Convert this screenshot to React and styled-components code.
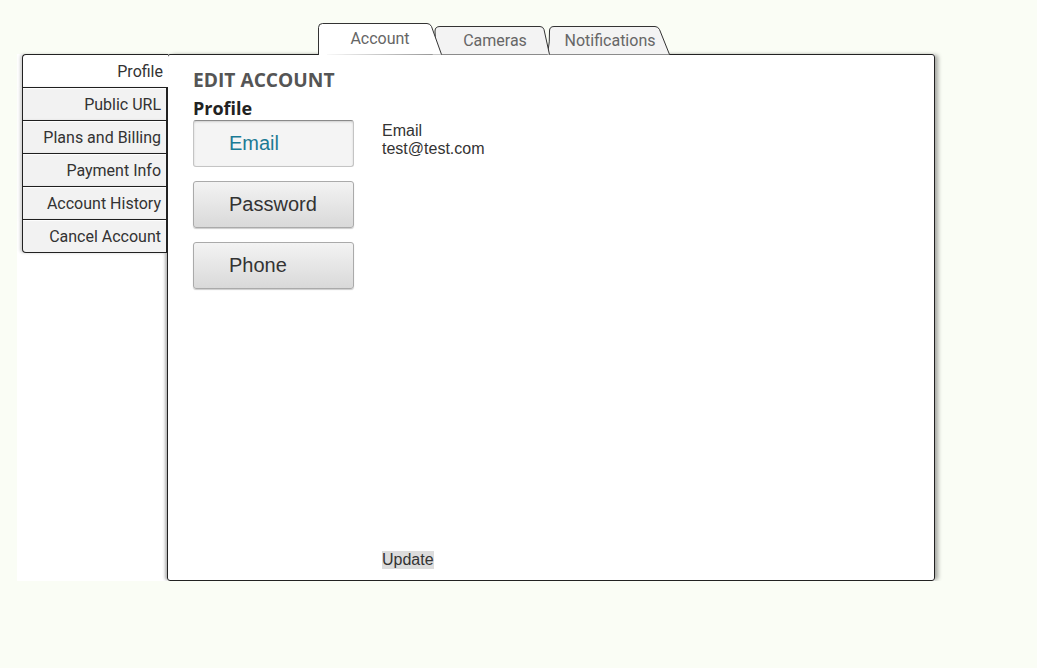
import React from 'react';
import styled, { createGlobalStyle } from 'styled-components';

const GlobalStyle = createGlobalStyle`
  body {
    margin: 0;
    background: #fafdf5;
    font-family: 'Liberation Sans', Arial, sans-serif;
  }
`;

const Page = styled.div`
  padding: 23px 0 0 17px;
  width: 918px;
`;

const TabStrip = styled.div`
  display: flex;
  align-items: flex-end;
  height: 32px;
  padding-left: 301px;
  margin-bottom: -1px;
  position: relative;
  z-index: 2;
`;

const Tab = styled.div`
  position: relative;
  width: ${p => p.w}px;
  height: ${p => p.h}px;
  margin-left: ${p => p.ml || 0}px;
  z-index: ${p => p.z};
  display: flex;
  align-items: center;
  justify-content: center;
  padding-left: ${p => p.pl || 0}px;
  box-sizing: border-box;
  font-family: Roboto, 'Liberation Sans', sans-serif;
  font-size: 16px;
  color: #666;
  svg {
    position: absolute;
    left: 0;
    top: 0;
  }
  span {
    position: relative;
    margin-top: ${p => p.mt || 0}px;
  }
`;

const Body = styled.div`
  display: flex;
  height: 527px;
  background: #fff;
`;

const Sidebar = styled.div`
  width: 145px;
  padding-left: 5px;
  display: flex;
  flex-direction: column;
  position: relative;
  z-index: 1;
`;

const SideItem = styled.div`
  height: 32px;
  border: 1px solid #222;
  border-top: ${p => (p.first ? '1px solid #222' : 'none')};
  border-right: ${p => (p.active ? 'none' : '1px solid #222')};
  margin-right: ${p => (p.active ? '-1px' : '0')};
  border-radius: ${p => (p.first ? '4px 0 0 0' : p.last ? '0 0 0 4px' : '0')};
  background: ${p => (p.active ? '#fff' : '#f2f2f2')};
  box-shadow: -2px 0 3px rgba(0, 0, 0, 0.18), inset 0 1px 1px rgba(255, 255, 255, 0.9);
  display: flex;
  align-items: center;
  justify-content: flex-end;
  padding-right: 5px;
  font-family: Roboto, 'Liberation Sans', sans-serif;
  font-size: 16px;
  color: #333;
`;

const Panel = styled.div`
  flex: 1;
  border: 1px solid #222;
  border-radius: 3px;
  box-shadow: 4px 0 4px -1px rgba(0, 0, 0, 0.35), -3px 0 3px -1px rgba(0, 0, 0, 0.3);
  display: flex;
  flex-direction: column;
  padding: 11px 0 11px 25px;
`;

const Heading = styled.h2`
  margin: 0;
  font-family: 'Open Sans', sans-serif;
  font-weight: 700;
  font-size: 19.2px;
  line-height: 28px;
  color: #555;
`;

const SubHeading = styled.h3`
  margin: 3px 0 0;
  font-family: 'Open Sans', sans-serif;
  font-weight: 700;
  font-size: 18px;
  line-height: 22px;
  color: #222;
`;

const Columns = styled.div`
  flex: 1;
  display: flex;
  gap: 28px;
  margin-top: 1px;
`;

const ButtonCol = styled.div`
  display: flex;
  flex-direction: column;
  gap: 14px;
`;

const NavButton = styled.button`
  width: 161px;
  height: 47px;
  box-sizing: border-box;
  text-align: left;
  padding: 0 0 0 35px;
  font-family: 'Liberation Sans', Arial, sans-serif;
  font-size: 20px;
  border-radius: 3px;
  cursor: pointer;
  ${p =>
    p.active
      ? `
    background: #f4f4f4;
    color: #1b7a95;
    border: 1px solid #c4c4c4;
    border-top-color: #8a8a8a;
    box-shadow: inset 0 1px 2px rgba(0,0,0,0.15);
  `
      : `
    background: linear-gradient(#f3f3f3, #d9d9d9);
    color: #333;
    border: 1px solid #aaa;
    box-shadow: 0 1px 1px rgba(0,0,0,0.2);
  `}
`;

const InfoCol = styled.div`
  flex: 1;
  display: flex;
  flex-direction: column;
  padding-top: 2px;
`;

const Info = styled.div`
  font-family: 'Liberation Sans', Arial, sans-serif;
  font-size: 16px;
  line-height: 18px;
  color: #333;
`;

const UpdateButton = styled.button`
  margin-top: auto;
  align-self: flex-start;
  border: none;
  padding: 0;
  background: #dcdcdc;
  font-family: 'Liberation Sans', Arial, sans-serif;
  font-size: 16px;
  line-height: 18px;
  color: #333;
`;

function TabShape({ w, h, fill, d }) {
  return (
    <svg width={w} height={h} viewBox={`0 0 ${w} ${h}`}>
      <path d={d} fill={fill} stroke="#333" strokeWidth="1" />
    </svg>
  );
}

const sideItems = ['Profile', 'Public URL', 'Plans and Billing', 'Payment Info', 'Account History', 'Cancel Account'];

export default function App() {
  return (
    <>
      <GlobalStyle />
      <Page>
        <TabStrip>
          <Tab w={124} h={32} z={3} mt={-1}>
            <TabShape w={124} h={32} fill="#fff" d="M0.5,32 V4.5 Q0.5,0.5 4.5,0.5 H109 Q112,0.5 113.5,3.5 L123.5,31.5" />
            <span>Account</span>
          </Tab>
          <Tab w={118} h={29} ml={-10} z={2} pl={8}>
            <TabShape w={118} h={29} fill="#f3f3f3" d="M0.5,28.5 Q4,15 3,5 Q3,0.5 8,0.5 H108 Q111,0.5 112,3.5 L117.5,28.5" />
            <span>Cameras</span>
          </Tab>
          <Tab w={123} h={29} ml={-3} z={1} pl={3}>
            <TabShape w={123} h={29} fill="#f3f3f3" d="M0.5,28.5 Q3,15 2.5,5 Q2.5,0.5 7,0.5 H108 Q111,0.5 112.5,3.5 L122.5,28.5" />
            <span>Notifications</span>
          </Tab>
        </TabStrip>
        <Body>
          <Sidebar>
            {sideItems.map((label, i) => (
              <SideItem key={label} first={i === 0} last={i === sideItems.length - 1} active={i === 0}>
                {label}
              </SideItem>
            ))}
          </Sidebar>
          <Panel>
            <Heading>EDIT ACCOUNT</Heading>
            <SubHeading>Profile</SubHeading>
            <Columns>
              <ButtonCol>
                <NavButton active>Email</NavButton>
                <NavButton>Password</NavButton>
                <NavButton>Phone</NavButton>
              </ButtonCol>
              <InfoCol>
                <Info>Email</Info>
                <Info>test@test.com</Info>
                <UpdateButton>Update</UpdateButton>
              </InfoCol>
            </Columns>
          </Panel>
        </Body>
      </Page>
    </>
  );
}
